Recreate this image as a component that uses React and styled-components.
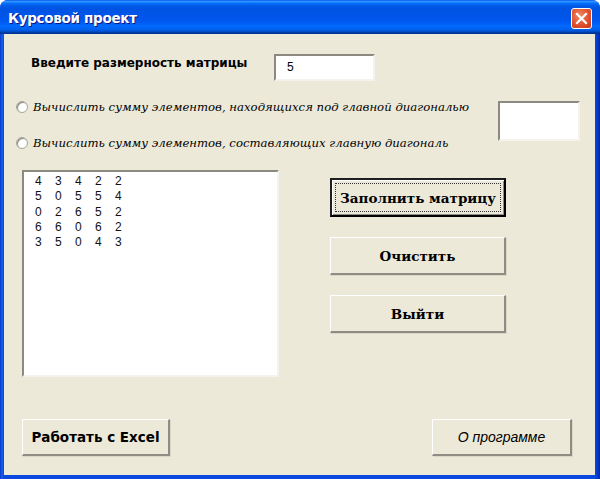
import React from "react";
import styled, { createGlobalStyle } from "styled-components";

const Global = createGlobalStyle`
  html, body { margin: 0; padding: 0; background: #ffffff; }
  #root { width: 600px; height: 479px; }
`;

const Window = styled.div`
  width: 600px;
  height: 479px;
  display: flex;
  flex-direction: column;
  box-sizing: border-box;
  background: #0a3fd8;
  border-radius: 8px 8px 0 0;
  overflow: hidden;
`;

const TitleBar = styled.div`
  height: 34px;
  flex: none;
  display: flex;
  align-items: center;
  justify-content: space-between;
  padding: 0 8px 0 8px;
  box-sizing: border-box;
  background: linear-gradient(
    to bottom,
    #0058ee 0%, #3593ff 4%, #288eff 6%, #127dff 8%, #036ffc 10%,
    #0262ee 14%, #0057e5 20%, #0054e3 24%, #0055eb 56%, #005bf5 66%,
    #026afe 76%, #0062ef 86%, #0052d6 92%, #0040ab 94%, #003092 100%
  );
`;

const Title = styled.span`
  color: #ffffff;
  font-family: "DejaVu Sans", sans-serif;
  font-weight: bold;
  font-size: 13.5px;
  letter-spacing: -0.3px;
  text-shadow: 1px 1px 0 #0a1883;
  padding-top: 2px;
`;

const CloseButton = styled.div`
  width: 21px;
  height: 21px;
  border: 1px solid #ffffff;
  border-radius: 3px;
  box-sizing: border-box;
  background: radial-gradient(circle at 40% 35%, #f08a6a 0%, #e0512d 55%, #c2381a 100%);
  display: flex;
  align-items: center;
  justify-content: center;
  margin-top: 2px;
`;

const Frame = styled.div`
  flex: 1;
  display: flex;
  padding: 0 5px 4px 4px;
  background: linear-gradient(to right, #0838c8 0px, #1660e8 2px, #0a48e0 4px, #0a48e0 calc(100% - 5px), #0536c0 calc(100% - 2px), #002a9a 100%);
`;

const Client = styled.div`
  width: 591px;
  display: flex;
  flex-direction: column;
  background: #ece9d8;
  padding: 0 0 19px 0;
  box-sizing: border-box;
  overflow: hidden;
`;

const SizeRow = styled.div`
  display: flex;
  align-items: center;
  margin-top: 20px;
  padding-left: 27px;
`;

const BoldLabel = styled.span`
  width: 243px;
  font-family: "DejaVu Sans", sans-serif;
  font-weight: bold;
  font-size: 12px;
  color: #000;
  margin-top: -10px;
`;

const TextBox = styled.div`
  width: ${(p) => p.$w}px;
  height: ${(p) => p.$h}px;
  flex: none;
  box-sizing: border-box;
  background: #ffffff;
  border-top: 2px solid #8c8a80;
  border-left: 2px solid #8c8a80;
  border-right: 2px solid #f4f3ee;
  border-bottom: 2px solid #f4f3ee;
  font-family: "Liberation Sans", sans-serif;
  font-size: 12px;
  color: #000;
  padding: 4px 0 0 11px;
`;

const RadioBlock = styled.div`
  display: flex;
  margin-top: 16px;
`;

const RadioColumn = styled.div`
  width: 494px;
  flex: none;
  padding-left: 12px;
  box-sizing: border-box;
  display: flex;
  flex-direction: column;
  gap: 16px;
`;

const RadioRow = styled.div`
  height: 20px;
  display: flex;
  align-items: center;
  gap: 5px;
`;

const RadioCircle = styled.span`
  width: 12px;
  height: 12px;
  flex: none;
  border-radius: 50%;
  box-sizing: border-box;
  background: radial-gradient(circle at 60% 60%, #ffffff 40%, #e4e2d8 100%);
  border: 1px solid #a7a69c;
  box-shadow: inset 1px 1px 0 #8e8c84;
`;

const RadioText = styled.span`
  font-family: "DejaVu Serif", serif;
  font-style: italic;
  font-size: 11.7px;
  color: #000;
  white-space: nowrap;
`;

const SideBox = styled(TextBox)`
  margin-top: 4px;
`;

const Main = styled.div`
  display: flex;
  margin-top: 17px;
  padding-left: 18px;
`;

const ListBox = styled.div`
  width: 257px;
  height: 207px;
  box-sizing: border-box;
  background: #ffffff;
  border-top: 2px solid #8c8a80;
  border-left: 2px solid #8c8a80;
  border-right: 2px solid #f4f3ee;
  border-bottom: 2px solid #f4f3ee;
  padding: 2px 0 0 11px;
  font-family: "Liberation Sans", sans-serif;
  font-size: 12px;
  line-height: 15.3px;
  color: #111;
`;

const MatrixRow = styled.div`
  display: flex;
`;

const Cell = styled.span`
  width: 20px;
`;

const ButtonColumn = styled.div`
  display: flex;
  flex-direction: column;
  gap: 20px;
  margin-left: 51px;
  padding-top: 8px;
`;

const Button = styled.div`
  width: ${(p) => p.$w}px;
  height: ${(p) => p.$h}px;
  box-sizing: border-box;
  display: flex;
  align-items: center;
  justify-content: center;
  background: #ece9d8;
  border-top: 1px solid #ffffff;
  border-left: 1px solid #ffffff;
  border-right: 2px solid #8f8d83;
  border-bottom: 2px solid #8f8d83;
  box-shadow: 1px 1px 0 #dad7c6;
  color: #000;
  font-family: ${(p) => p.$font};
  font-weight: ${(p) => (p.$bold ? "bold" : "normal")};
  font-style: ${(p) => (p.$italic ? "italic" : "normal")};
  font-size: ${(p) => p.$size}px;
  white-space: nowrap;
`;

const DefaultButton = styled(Button)`
  border: 2px solid #1e1e1e;
  border-right-color: #000;
  border-bottom-color: #000;
  box-shadow: inset 1px 1px 0 #ffffff, inset -1px -1px 0 #8f8d83;
  padding: 3px;
`;

const FocusRect = styled.span`
  flex: 1;
  align-self: stretch;
  display: flex;
  align-items: center;
  justify-content: center;
  border: 1px dotted #333;
`;

const Footer = styled.div`
  margin-top: auto;
  display: flex;
  justify-content: space-between;
  padding: 0 23px 0 18px;
`;

const serif = `"DejaVu Serif", serif`;

const matrix = [
  [4, 3, 4, 2, 2],
  [5, 0, 5, 5, 4],
  [0, 2, 6, 5, 2],
  [6, 6, 0, 6, 2],
  [3, 5, 0, 4, 3],
];

export default function App() {
  return (
    <>
      <Global />
      <Window>
        <TitleBar>
          <Title>Курсовой проект</Title>
          <CloseButton>
            <svg width="13" height="13" viewBox="0 0 13 13">
              <path d="M2 2 L11 11 M11 2 L2 11" stroke="#ffffff" strokeWidth="2.2" strokeLinecap="square" />
            </svg>
          </CloseButton>
        </TitleBar>
        <Frame>
          <Client>
            <SizeRow>
              <BoldLabel>Введите размерность матрицы</BoldLabel>
              <TextBox $w={101} $h={27}>5</TextBox>
            </SizeRow>
            <RadioBlock>
              <RadioColumn>
                <RadioRow>
                  <RadioCircle />
                  <RadioText>Вычислить сумму элементов, находящихся под главной диагональю</RadioText>
                </RadioRow>
                <RadioRow>
                  <RadioCircle />
                  <RadioText>Вычислить сумму элементов, составляющих главную диагональ</RadioText>
                </RadioRow>
              </RadioColumn>
              <SideBox $w={82} $h={40} />
            </RadioBlock>
            <Main>
              <ListBox>
                {matrix.map((row, i) => (
                  <MatrixRow key={i}>
                    {row.map((v, j) => (
                      <Cell key={j}>{v}</Cell>
                    ))}
                  </MatrixRow>
                ))}
              </ListBox>
              <ButtonColumn>
                <DefaultButton $w={176} $h={39} $font={serif} $bold $size={13.5}>
                  <FocusRect>Заполнить матрицу</FocusRect>
                </DefaultButton>
                <Button $w={176} $h={38} $font={serif} $bold $size={13.5}>Очистить</Button>
                <Button $w={176} $h={38} $font={serif} $bold $size={13.5}>Выйти</Button>
              </ButtonColumn>
            </Main>
            <Footer>
              <Button $w={148} $h={37} $font={`"DejaVu Sans", sans-serif`} $bold $size={13.5}>Работать с Excel</Button>
              <Button $w={140} $h={37} $font={`"Liberation Sans", sans-serif`} $italic $size={14}>О программе</Button>
            </Footer>
          </Client>
        </Frame>
      </Window>
    </>
  );
}
